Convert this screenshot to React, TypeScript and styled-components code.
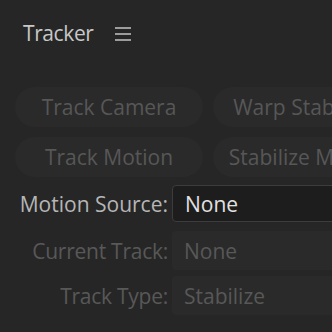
import React from "react";
import styled, { createGlobalStyle } from "styled-components";

const GlobalStyle = createGlobalStyle`
  html, body {
    margin: 0;
    padding: 0;
    background: #262626;
  }
  body {
    font-family: "Open Sans", "Noto Sans", sans-serif;
  }
`;

const trackButtons = ["Track Camera", "Warp Stabilizer", "Track Motion", "Stabilize Motion"];

const fields = [
  { label: "Motion Source:", value: "None", active: true },
  { label: "Current Track:", value: "None", active: false },
  { label: "Track Type:", value: "Stabilize", active: false },
];

const App: React.FC = () => {
  return (
    <Panel>
      <GlobalStyle />
      <Header>
        <Title>Tracker</Title>
        <MenuIcon width="16" height="14" viewBox="0 0 16 14">
          <path d="M0 1h16M0 7h16M0 13h16" stroke="#c4c4c4" strokeWidth="1.6" />
        </MenuIcon>
      </Header>
      {/* Buttons */}
      <ButtonGrid>
        {trackButtons.map((label) => (
          <PillButton key={label} disabled>
            {label}
          </PillButton>
        ))}
      </ButtonGrid>
      {/* Form */}
      <Form>
        {fields.map((f) => (
          <FieldRow key={f.label} $active={f.active}>
            <Label $active={f.active}>{f.label}</Label>
            <Field $active={f.active}>{f.value}</Field>
          </FieldRow>
        ))}
      </Form>
    </Panel>
  );
};

const Panel = styled.div`
  width: 332px;
  height: 332px;
  overflow: hidden;
  background: #262626;
`;

const Header = styled.div`
  display: flex;
  align-items: center;
  gap: 21px;
  height: 66px;
  padding-left: 23px;
`;

const Title = styled.div`
  font-size: 21px;
  letter-spacing: -0.4px;
  color: #c8c8c8;
`;

const MenuIcon = styled.svg`
  display: block;
  margin-top: 1px;
`;

const ButtonGrid = styled.div`
  display: grid;
  grid-template-columns: 188px 188px;
  grid-auto-rows: 40px;
  column-gap: 10px;
  row-gap: 10px;
  padding: 21px 0 0 15px;
  width: max-content;
`;

const PillButton = styled.button`
  border: none;
  border-radius: 20px;
  background: #2a2a2a;
  color: #575757;
  font-family: "Open Sans", "Noto Sans", sans-serif;
  font-size: 21px;
  white-space: nowrap;
  overflow: hidden;
  padding: 0;
`;

const Form = styled.div`
  display: flex;
  flex-direction: column;
  gap: 6px;
  padding-top: 8px;
  width: 420px;
`;

const FieldRow = styled.div<{ $active?: boolean }>`
  display: grid;
  grid-template-columns: 168px 1fr;
  column-gap: 4px;
  align-items: center;
  padding-bottom: ${(p) => (p.$active ? "3px" : "0")};
`;

const Label = styled.div<{ $active?: boolean }>`
  text-align: right;
  font-size: 21px;
  letter-spacing: ${(p) => (p.$active ? "0" : "-0.25px")};
  color: ${(p) => (p.$active ? "#b6b6b6" : "#585858")};
  white-space: nowrap;
`;

const Field = styled.div<{ $active?: boolean }>`
  box-sizing: border-box;
  height: ${(p) => (p.$active ? "37px" : "39px")};
  display: flex;
  align-items: center;
  padding-left: 12px;
  border-radius: 4px;
  font-size: 21px;
  background: ${(p) => (p.$active ? "#1d1d1d" : "#2a2a2a")};
  border: ${(p) => (p.$active ? "1px solid #3c3c3c" : "none")};
  color: ${(p) => (p.$active ? "#e2e2e2" : "#585858")};
`;

export default App;
